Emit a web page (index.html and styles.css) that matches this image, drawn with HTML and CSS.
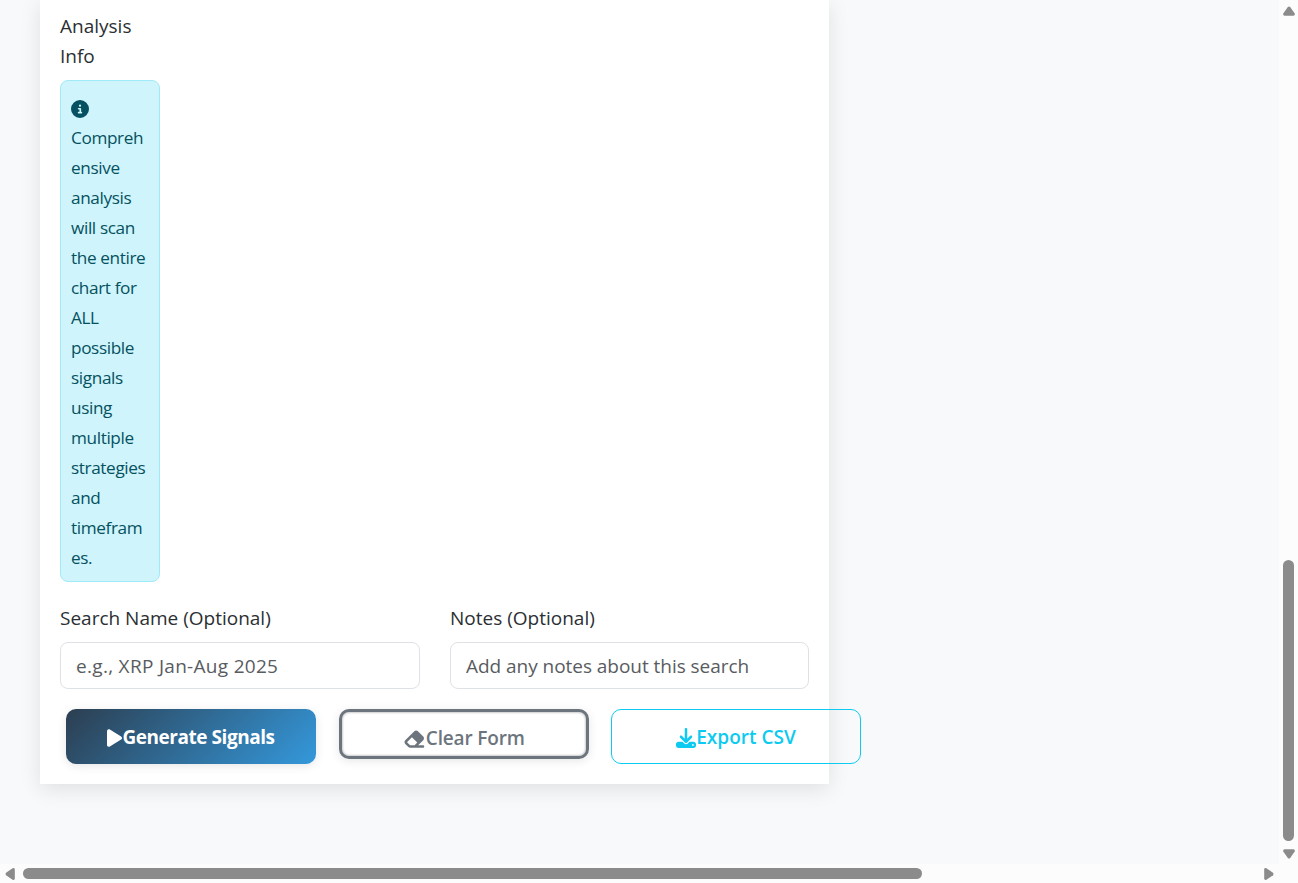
FILE: index.html
```html
<!DOCTYPE html>
<html lang="en">
<head>
<meta charset="utf-8">
<title>Signal Search</title>
<link rel="stylesheet" href="styles.css">
</head>
<body>
<div class="window">
  <main class="viewport">
    <section class="card">
      <div class="info-column">
        <div class="label">Analysis<br>Info</div>
        <div class="alert">
          <svg class="info-icon" viewBox="0 0 512 512"><path d="M256 512A256 256 0 1 0 256 0a256 256 0 1 0 0 512zM216 336l24 0 0-64-24 0c-13.3 0-24-10.7-24-24s10.7-24 24-24l48 0c13.3 0 24 10.7 24 24l0 88 8 0c13.3 0 24 10.7 24 24s-10.7 24-24 24l-80 0c-13.3 0-24-10.7-24-24s10.7-24 24-24zm40-208a32 32 0 1 1 0 64 32 32 0 1 1 0-64z"/></svg>
          <div class="alert-text">Compreh<br>ensive<br>analysis<br>will scan<br>the entire<br>chart for<br>ALL<br>possible<br>signals<br>using<br>multiple<br>strategies<br>and<br>timefram<br>es.</div>
        </div>
      </div>
      <div class="fields">
        <label class="field"><span class="label">Search Name (Optional)</span><input class="input name-input" type="text" placeholder="e.g., XRP Jan-Aug 2025"></label>
        <label class="field"><span class="label">Notes (Optional)</span><input class="input" type="text" placeholder="Add any notes about this search"></label>
      </div>
      <div class="actions">
        <button class="btn btn-primary"><svg class="icon icon-play" viewBox="0 0 384 512"><path d="M73 39c-14.8-9.1-33.4-9.4-48.5-.9S0 62.6 0 80L0 432c0 17.4 9.4 33.4 24.5 41.9s33.7 8.1 48.5-.9L361 297c14.3-8.7 23-24.2 23-41s-8.7-32.2-23-41L73 39z"/></svg><span>Generate Signals</span></button>
        <button class="btn btn-clear"><svg class="icon icon-eraser" viewBox="0 0 576 512"><path d="M290.7 57.4L57.4 290.7c-25 25-25 65.5 0 90.5l80 80c12 12 28.3 18.7 45.3 18.7L288 480l9.4 0L512 480c17.7 0 32-14.3 32-32s-14.3-32-32-32l-124.1 0L518.6 285.3c25-25 25-65.5 0-90.5L381.3 57.4c-25-25-65.5-25-90.5 0zM297.4 416l-9.4 0-105.4 0-80-80L227.3 211.3 364.7 348.7 297.4 416z"/></svg><span>Clear Form</span></button>
        <button class="btn btn-export"><svg class="icon icon-download" viewBox="0 0 512 512"><path d="M288 32c0-17.7-14.3-32-32-32s-32 14.3-32 32l0 242.7-73.4-73.4c-12.5-12.5-32.8-12.5-45.3 0s-12.5 32.8 0 45.3l128 128c12.5 12.5 32.8 12.5 45.3 0l128-128c12.5-12.5 12.5-32.8 0-45.3s-32.8-12.5-45.3 0L288 274.7 288 32zM64 352c-35.3 0-64 28.7-64 64l0 32c0 35.3 28.7 64 64 64l384 0c35.3 0 64-28.7 64-64l0-32c0-35.3-28.7-64-64-64l-101.5 0-45.3 45.3c-25 25-65.5 25-90.5 0L165.5 352 64 352zm368 56a24 24 0 1 1 0 48 24 24 0 1 1 0-48z"/></svg><span>Export CSV</span></button>
      </div>
    </section>
  </main>
  <div class="scroll-y">
    <svg class="arrow-y" viewBox="0 0 14 10"><path d="M5.8 1Q7 0 8.2 1L12.7 7.6Q13.4 9.6 11.6 9.8H2.4Q.6 9.6 1.3 7.6Z"/></svg>
    <div class="thumb-y"></div>
    <svg class="arrow-y" viewBox="0 0 14 10"><path d="M5.8 9Q7 10 8.2 9L12.7 2.4Q13.4 .4 11.6 .2H2.4Q.6 .4 1.3 2.4Z"/></svg>
  </div>
  <div class="scroll-x">
    <svg class="arrow-x" viewBox="0 0 10 14"><path d="M1 5.8Q0 7 1 8.2L7.6 12.7Q9.6 13.4 9.8 11.6V2.4Q9.6 .6 7.6 1.3Z"/></svg>
    <div class="thumb-x"></div>
    <svg class="arrow-x" viewBox="0 0 10 14"><path d="M9 5.8Q10 7 9 8.2L2.4 12.7Q.4 13.4 .2 11.6V2.4Q.4 .6 2.4 1.3Z"/></svg>
  </div>
</div>
</body>
</html>
```
FILE: styles.css
```css
* { box-sizing: border-box; }
body {
  margin: 0;
  overflow: hidden;
  font-family: "Open Sans", "Noto Sans", sans-serif;
  font-size: 19px;
  line-height: 30px;
  color: #2b2f33;
}
.window {
  display: grid;
  grid-template-columns: 1279px 19px;
  grid-template-rows: 864px 19px;
  width: 1298px;
  height: 883px;
  background: #fcfcfc;
}
.viewport { background: #f8f9fb; overflow: hidden; }
.card {
  width: 789px;
  height: 784px;
  margin-left: 40px;
  padding: 11px 20px 20px;
  background: #fff;
  box-shadow: 0 5px 20px rgba(0, 0, 0, .1);
}
.info-column { width: 100px; }
.label { display: block; letter-spacing: 0; }
.alert {
  height: 502px;
  margin-top: 9px;
  padding: 10px;
  border: 1px solid #9eeaf9;
  border-radius: 8px;
  background: #cff4fc;
  color: #055160;
  font-size: 17.2px;
  white-space: nowrap;
}
.info-icon { display: block; width: 18px; height: 18px; margin: 9px 0 3px; fill: currentColor; }
.alert-text { letter-spacing: -.38px; padding-top: 2px; }
.fields { display: grid; grid-template-columns: 360px 359px; column-gap: 30px; margin-top: 21px; }
.input {
  display: block;
  width: 100%;
  height: 47px;
  margin-top: 9px;
  padding: 0 15px;
  border: 1px solid #dee2e6;
  border-radius: 8px;
  background: #fff;
  font: inherit;
  letter-spacing: -.04px;
}
.name-input { letter-spacing: .3px; }
.input::placeholder { color: #595c5f; opacity: 1; }
.actions { display: flex; align-items: flex-start; width: 795px; margin: 20px 0 0 6px; }
.btn {
  display: flex;
  align-items: center;
  justify-content: center;
  flex: none;
  width: 250px;
  height: 55px;
  padding: 0;
  border: 0;
  border-radius: 10px;
  background: transparent;
  font: 600 19px/30px "Open Sans", "Noto Sans", sans-serif;
  white-space: nowrap;
}
.icon { flex: none; height: 20px; margin-top: 3px; fill: currentColor; }
.icon-play { width: 15px; }
.icon-eraser { width: 22.5px; }
.icon-download { width: 20px; }
.btn-primary {
  color: #fff;
  font-weight: 700;
  letter-spacing: -.45px;
  background: linear-gradient(135deg, #2c3e50, #3498db);
  box-shadow: 0 2px 10px rgba(0, 0, 0, .1);
}
.btn-clear {
  height: 50px;
  margin-left: 23px;
  padding-top: 7px;
  border: 3px solid #6c757d;
  color: #6c757d;
  background: #fff;
  letter-spacing: -.15px;
  box-shadow: 0 2px 10px rgba(0, 0, 0, .1), inset 0 0 2px 1px #ccc;
}
.btn-export { margin-left: 22px; border: 1px solid #0dcaf0; color: #0dcaf0; }
.scroll-y { display: flex; flex-direction: column; padding: 6px 0 0 3px; }
.arrow-y { width: 14px; height: 10px; fill: #8b8b8b; }
.thumb-y { width: 11px; height: 281px; margin: 544px 0 8px 1px; border-radius: 6px; background: #8b8b8b; }
.scroll-x { display: flex; align-items: flex-start; padding: 3px 0 0 5px; }
.arrow-x { flex: none; width: 10px; height: 14px; fill: #8b8b8b; }
.thumb-x { flex: none; width: 899px; height: 11px; margin: 1px 342px 0 8px; border-radius: 6px; background: #8b8b8b; }
```
